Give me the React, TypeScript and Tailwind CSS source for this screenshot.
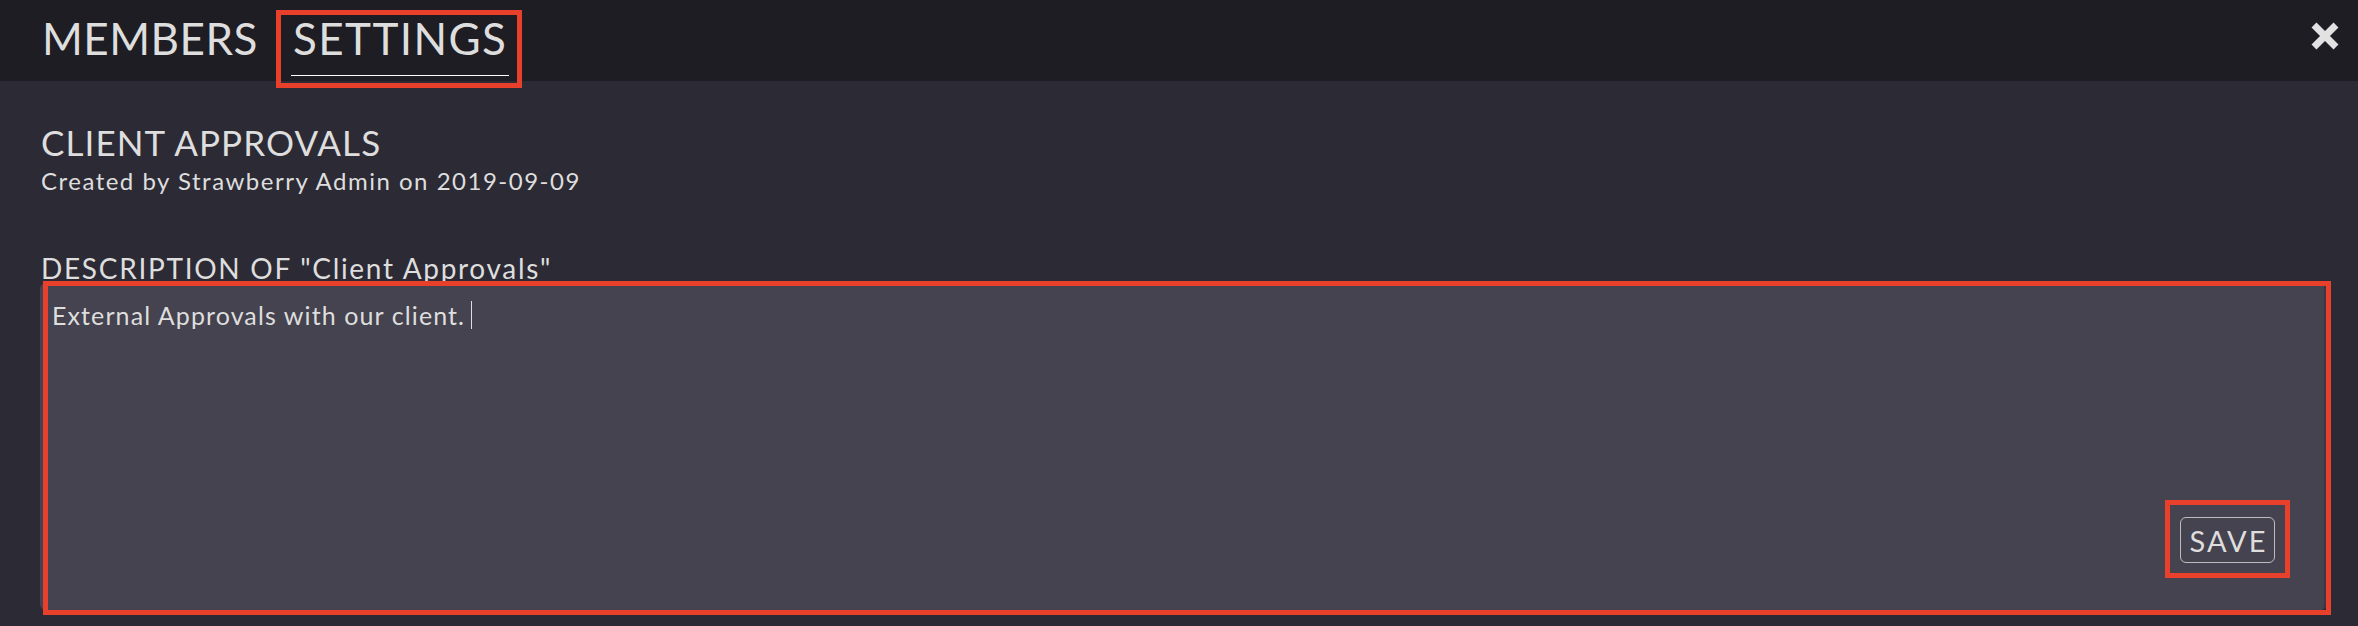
import React from "react";

const font = { fontFamily: "Lato, 'Open Sans', sans-serif" };

export default function App() {
  return (
    <div
      className="relative w-full h-[626px] bg-[#2c2b35] text-[#dedede] flex flex-col overflow-hidden"
      style={font}
    >
      {/* Header */}
      <div className="h-[81px] bg-[#1e1d24] flex items-start pl-[42px] pr-[18px] pt-[16px]">
        <div className="text-[44px] leading-none tracking-[0.5px]">MEMBERS</div>
        <div className="ml-[35px] flex flex-col">
          <div className="text-[44px] leading-none tracking-[1.4px]">SETTINGS</div>
          <div className="h-px bg-white mt-[15px] -mx-[2px]" />
        </div>
        <div className="flex-1" />
        <button className="mt-[5px] w-[30px] h-[30px]" aria-label="close">
          <svg viewBox="0 0 30 30" width="30" height="30">
            <path d="M4 4 L26 26 M26 4 L4 26" stroke="#e2e2e2" strokeWidth="7" strokeLinecap="butt" />
          </svg>
        </button>
      </div>

      {/* Content */}
      <div className="flex-1 flex flex-col pl-[41px] pr-[31px]">
        <div className="mt-[44px] text-[35px] leading-none tracking-[1.1px]">CLIENT APPROVALS</div>
        <div className="mt-[9px] text-[24px] leading-none tracking-[1.5px]">Created by Strawberry Admin on 2019-09-09</div>
        <div className="mt-[61px] text-[28px] leading-none tracking-[1.7px]">DESCRIPTION OF "Client Approvals"</div>
        <div className="mt-[1px] -ml-[1px] h-[327px] bg-[#45434f] rounded-[6px] border-r-[3px] border-[#3a3843] flex flex-col">
          <div className="pt-[18px] pl-[12px] text-[25px] leading-none tracking-[1.1px] flex items-center">
            <span>External Approvals with our client.</span>
            <span className="ml-[6px] inline-block w-px h-[28px] bg-[#dedede]" />
          </div>
          <div className="flex-1" />
          <div className="flex justify-end pr-[49px] pb-[47px]">
            <button className="w-[95px] h-[46px] border border-[#bdbdbd] rounded-[6px] text-[29px] leading-none tracking-[2px] text-[#dedede] flex items-center justify-center pt-[1px] pl-[2px]">
              SAVE
            </button>
          </div>
        </div>
      </div>

      {/* annotation outlines */}
      <div className="absolute left-[276px] top-[10px] w-[246px] h-[78px] border-[5px] border-[#e8402a]" />
      <div className="absolute left-[43px] top-[281px] w-[2288px] h-[334px] border-[5px] border-[#e8402a]" />
      <div className="absolute left-[2165px] top-[500px] w-[125px] h-[78px] border-[5px] border-[#e8402a]" />
    </div>
  );
}
